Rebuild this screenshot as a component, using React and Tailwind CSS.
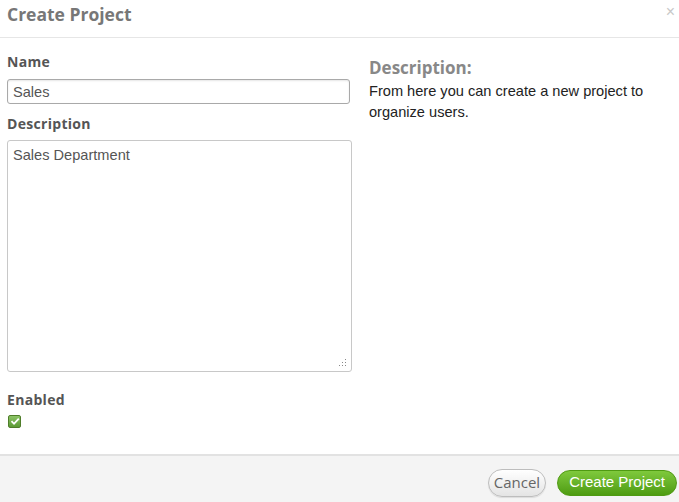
import { useState } from "react";

function Checkbox({ checked, onChange }) {
  return (
    <button
      onClick={() => onChange(!checked)}
      className="grid h-[13px] w-[13px] place-items-center rounded-[2px] border border-[#4f7d2a] bg-gradient-to-b from-[#8cc466] to-[#5c9a35]"
      aria-label="Enabled"
    >
      {checked && (
        <svg width="10" height="9" viewBox="0 0 10 9">
          <path d="M1.5 4.2 L4 6.8 L8.8 1.6" fill="none" stroke="#fff" strokeWidth="1.8" />
        </svg>
      )}
    </button>
  );
}

function Grip() {
  return (
    <svg className="pointer-events-none absolute bottom-[5px] right-[5px]" width="9" height="9" viewBox="0 0 9 9">
      {[
        [7, 1],
        [7, 4],
        [4, 4],
        [7, 7],
        [4, 7],
        [1, 7],
      ].map(([x, y]) => (
        <rect key={`${x}-${y}`} x={x} y={y} width="1" height="1" fill="#888" />
      ))}
    </svg>
  );
}

export default function App() {
  const [name, setName] = useState("Sales");
  const [desc, setDesc] = useState("Sales Department");
  const [enabled, setEnabled] = useState(true);
  return (
    <div className="flex h-[502px] w-[679px] flex-col overflow-hidden bg-white font-['Liberation_Sans',Arial,sans-serif]">
      <header className="flex h-[38px] shrink-0 items-start justify-between border-b border-[#e6e6e6] pl-[7px] pr-[4px]">
        <h1 className="pt-[1px] font-['Open_Sans',sans-serif] text-[17.5px] font-bold leading-[26px] text-[#777]">
          Create Project
        </h1>
        <span className="pt-[3px] text-[16px] leading-[18px] text-[#c8c8c8]">×</span>
      </header>

      <div className="flex flex-1 gap-[17px] pl-[7px] pt-[13px]">
        <div className="flex w-[345px] flex-col">
          <label className="font-['Open_Sans',sans-serif] text-[14px] font-bold leading-[22px] tracking-[0.3px] text-[#555]">
            Name
          </label>
          <input
            value={name}
            onChange={(e) => setName(e.target.value)}
            className="mt-[6px] h-[25px] w-[343px] rounded-[3px] border border-[#a9a9a9] px-[5px] text-[14.6px] text-[#555] shadow-[inset_0_1px_2px_rgba(0,0,0,0.1)] outline-none"
          />
          <label className="mt-[9px] font-['Open_Sans',sans-serif] text-[14px] font-bold leading-[22px] tracking-[0.3px] text-[#555]">
            Description
          </label>
          <div className="relative mt-[5px] h-[232px] w-[345px]">
            <textarea
              value={desc}
              onChange={(e) => setDesc(e.target.value)}
              className="h-full w-full resize-none rounded-[3px] border border-[#c8c8c8] px-[5px] py-[5px] text-[14.6px] leading-[18px] text-[#555] outline-none"
            />
            <Grip />
          </div>
          <label className="mt-[17px] font-['Open_Sans',sans-serif] text-[14px] font-bold leading-[22px] tracking-[0.3px] text-[#555]">
            Enabled
          </label>
          <div className="mt-[4px] pl-[1px]">
            <Checkbox checked={enabled} onChange={setEnabled} />
          </div>
        </div>

        <div className="w-[300px] pt-[6px]">
          <h3 className="font-['Open_Sans',sans-serif] text-[17px] font-bold leading-[22px] text-[#888]">
            Description:
          </h3>
          <p className="mt-[2px] text-[14.6px] leading-[21px] text-[#222]">
            From here you can create a new project to organize users.
          </p>
        </div>
      </div>

      <footer className="flex h-[48px] shrink-0 items-center justify-end gap-[11px] border-t-2 border-[#e2e2e2] bg-[#f4f4f4] pr-[2px] pt-[7px]">
        <button className="h-[28px] rounded-full border border-[#bdbdbd] bg-gradient-to-b from-white to-[#e4e4e4] px-[5px] font-['Open_Sans',sans-serif] text-[15px] text-[#666] shadow-[0_1px_1px_rgba(0,0,0,0.1)]">
          Cancel
        </button>
        <button className="h-[26px] rounded-full border border-[#4f9a12] bg-gradient-to-b from-[#7fc93c] to-[#4e9c10] px-[11px] text-[15px] text-white">
          Create Project
        </button>
      </footer>
    </div>
  );
}
